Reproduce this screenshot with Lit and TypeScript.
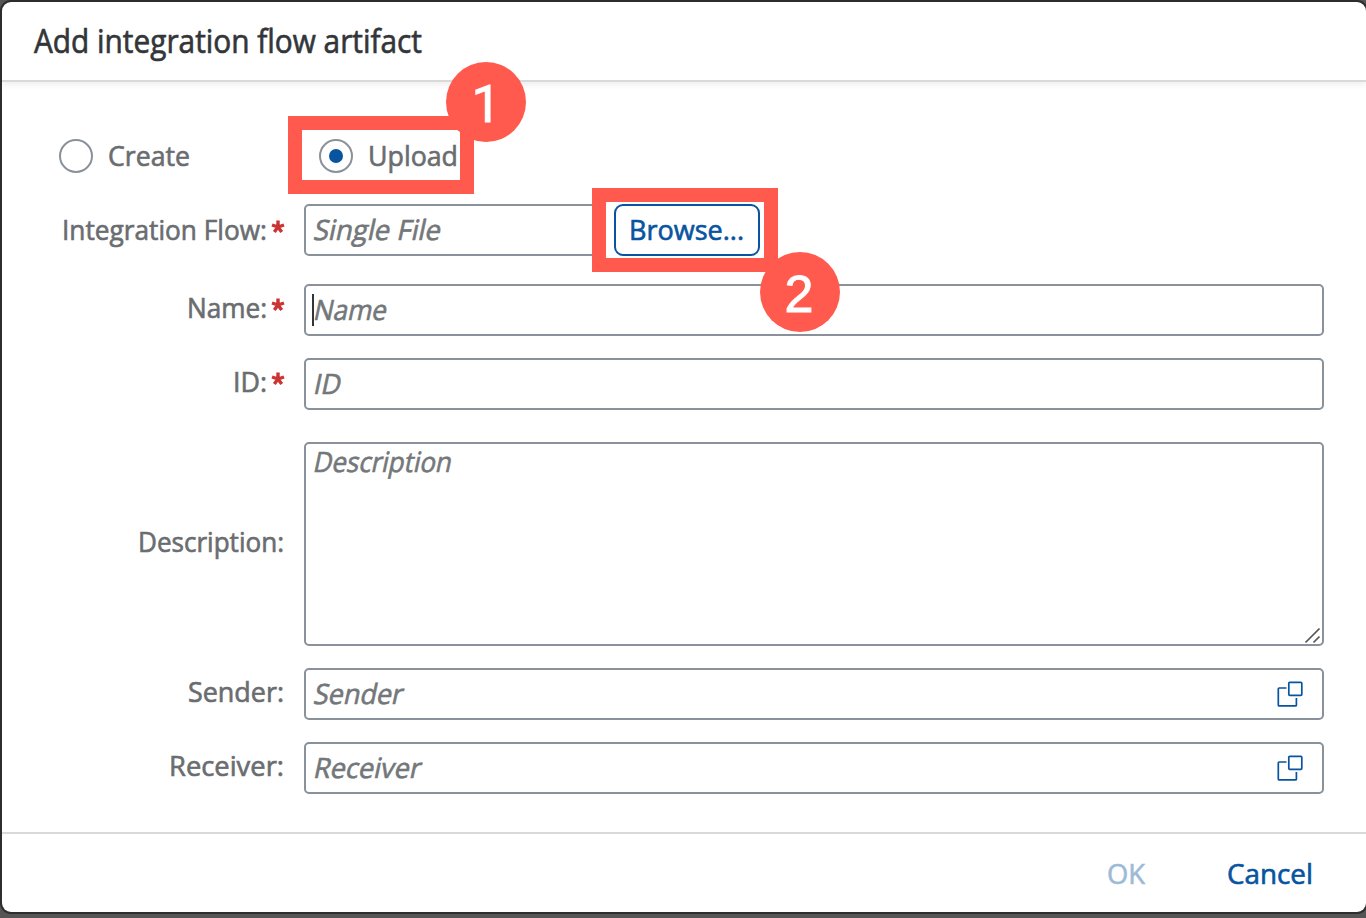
import { LitElement, html, css, nothing } from "lit";
import { customElement, property } from "lit/decorators.js";

/** A line of text condensed horizontally to a set width. */
@customElement("fit-text")
class FitText extends LitElement {
  @property({ type: Number }) width = 100;
  @property() text = "";
  @property({ type: Boolean }) slanted = false;
  static styles = css`
    :host { display: inline-block; flex: none; white-space: nowrap; -webkit-text-stroke: .65px currentColor; }
    .t { display: inline-block; transform-origin: 0 73%; font-style: normal; }
  `;
  render() {
    return html`<span class="t">${this.text}</span>`;
  }
  updated() {
    const t = this.renderRoot.querySelector<HTMLElement>(".t")!;
    t.style.transform = "none";
    const k = this.width / t.getBoundingClientRect().width;
    this.style.width = this.width + "px";
    t.style.transform = (this.slanted ? "skewX(-12deg) " : "") + `scaleX(${k})`;
  }
}

@customElement("app-root")
class AppRoot extends LitElement {
  static styles = css`
    :host {
      display: block; box-sizing: border-box; width: 1366px; height: 918px;
      padding: 2px 0 6px 2px; background: #555; overflow: hidden; position: relative;
      font-family: "Open Sans", "Noto Sans", sans-serif; font-size: 28px; line-height: 38px;
      color: #6a6d70;
    }
    .dialog {
      box-sizing: border-box; height: 910px; background: #fff; border-radius: 9px;
      box-shadow: 0 0 0 2px #2e2e2e; display: flex; flex-direction: column;
    }
    header {
      box-sizing: border-box; height: 80px; flex: none; padding: 17px 0 0 32px;
      border-bottom: 2px solid #d9d9d9; box-shadow: 0 3px 6px rgba(0, 0, 0, .07);
      border-radius: 9px 9px 0 0; font-size: 32px; line-height: 44px; color: #32363a;
    }
    main { flex: 1; padding: 54px 42px 0 57px; }
    .radios { display: flex; height: 40px; align-items: center; }
    .radio { display: flex; align-items: center; gap: 15px; width: 260px; }
    .radio fit-text { padding-bottom: 2px; }
    .ring {
      box-sizing: border-box; width: 34px; height: 34px; border: 2px solid #89919a;
      border-radius: 50%; display: flex; align-items: center; justify-content: center;
    }
    .dot { width: 14px; height: 14px; border-radius: 50%; background: #0854a0; }
    .row { display: flex; align-items: center; height: 52px; margin-top: 22px; }
    .row.first { margin-top: 28px; }
    .row.name { margin-top: 28px; }
    .row.desc { height: 204px; margin-top: 32px; }
    .label {
      width: 226px; margin-right: 19px; display: flex; justify-content: flex-end;
      box-sizing: border-box; height: 44px; padding-right: 1px;
    }
    .first .label { height: 40px; }
    .star { color: #cc3333; width: 18px; display: flex; justify-content: flex-end; margin-right: -1px; }
    .star svg { margin-top: 10px; }
    .field {
      box-sizing: border-box; flex: 1; height: 100%; border: 2px solid #89919a;
      border-radius: 5px; padding: 0 19px 2px 7px; display: flex; align-items: center;
      color: #74777a; position: relative;
    }
    .first .field { flex: none; width: 310px; }
    .desc .field { align-items: flex-start; line-height: 34px; }
    .help { margin: 1px 0 0 auto; display: block; }
    .caret { position: absolute; left: 6px; top: 8px; width: 2px; height: 32px; background: #32363a; }
    .grip { position: absolute; right: 0; bottom: -1px; display: block; }
    .browse {
      box-sizing: border-box; width: 146px; height: 52px; border: 2px solid #0854a0;
      border-radius: 9px; color: #0854a0; background: #fff; display: flex;
      justify-content: center; align-items: center; padding: 0 1px 2px 0;
    }
    footer {
      box-sizing: border-box; height: 80px; flex: none; border-top: 2px solid #d9d9d9;
      display: flex; justify-content: flex-end; gap: 82px; padding: 20px 53px 0 0; color: #0854a0;
    }
    .off { opacity: .4; }
    .mark { position: absolute; box-sizing: border-box; border: 14px solid #ff5a4d; }
    .m1 { left: 288px; top: 116px; width: 186px; height: 78px; }
    .m2 {
      left: 592px; top: 188px; width: 186px; height: 84px; background: #fff;
      padding: 2px 0 0 8px;
    }
    .num {
      position: absolute; box-sizing: border-box; width: 80px; height: 80px; border-radius: 50%;
      background: #ff5a4d; color: #fff; text-align: center; padding-right: 2px;
      font: 52px/84px "Liberation Sans", Arial, sans-serif; -webkit-text-stroke: 1px #fff;
    }
    .n1 { left: 446px; top: 62px; font-family: Roboto, sans-serif; line-height: 85px; padding-right: 0; }
    .n2 { left: 760px; top: 252px; }
  `;

  private row(name: string, label: string, lw: number, ph: string, pw: number,
    o: { req?: boolean; help?: boolean; caret?: boolean; grip?: boolean } = {}) {
    return html`<div class="row ${name}">
      <div class="label">
        <fit-text .text=${label} .width=${lw}></fit-text>
        ${o.req ? html`<span class="star"><svg width="14" height="14" viewBox="-7 -7 14 14">
          <path d="M0 0V-6.4M0 0L-6-2M0 0L6-2M0 0L-3.7 5.1M0 0L3.7 5.1" stroke="currentColor" stroke-width="3.4"/></svg></span>` : nothing}
      </div>
      <div class="field">
        ${o.caret ? html`<span class="caret"></span>` : nothing}
        <fit-text slanted .text=${ph} .width=${pw}></fit-text>
        ${o.help ? html`<svg class="help" width="26" height="26" viewBox="0 0 26 26" fill="none" stroke="#0854a0" stroke-width="1.7">
          <rect x="11.8" y="1.3" width="13" height="13" rx="1"/>
          <path d="M9.5 7H2.3Q1.3 7 1.3 8V23.9Q1.3 24.9 2.3 24.9H18.4Q19.4 24.9 19.4 23.9V17"/></svg>` : nothing}
        ${o.grip ? html`<svg class="grip" width="18" height="18" viewBox="0 0 18 18" stroke="#555" stroke-width="1.7">
          <path d="M1.5 15.5L15.5 1.5M9.5 15.5L15.5 9.5"/></svg>` : nothing}
      </div>
    </div>`;
  }

  render() {
    return html`
      <div class="dialog">
        <header><fit-text text="Add integration flow artifact" .width=${388}></fit-text></header>
        <main>
          <div class="radios">
            <div class="radio"><span class="ring"></span><fit-text text="Create" .width=${82}></fit-text></div>
            <div class="radio"><span class="ring"><span class="dot"></span></span><fit-text text="Upload" .width=${90}></fit-text></div>
          </div>
          ${this.row("first", "Integration Flow:", 205, "Single File", 127, { req: true })}
          ${this.row("name", "Name:", 80, "Name", 73, { req: true, caret: true })}
          ${this.row("id", "ID:", 34, "ID", 27, { req: true })}
          ${this.row("desc", "Description:", 146, "Description", 138, { grip: true })}
          ${this.row("sender", "Sender:", 96, "Sender", 89, { help: true })}
          ${this.row("receiver", "Receiver:", 115, "Receiver", 107, { help: true })}
        </main>
        <footer>
          <fit-text class="off" text="OK" .width=${38}></fit-text>
          <fit-text text="Cancel" .width=${86}></fit-text>
        </footer>
      </div>
      <div class="mark m1"></div>
      <div class="mark m2"><div class="browse"><fit-text text="Browse..." .width=${115}></fit-text></div></div>
      <div class="num n1">1</div>
      <div class="num n2">2</div>
    `;
  }
}
